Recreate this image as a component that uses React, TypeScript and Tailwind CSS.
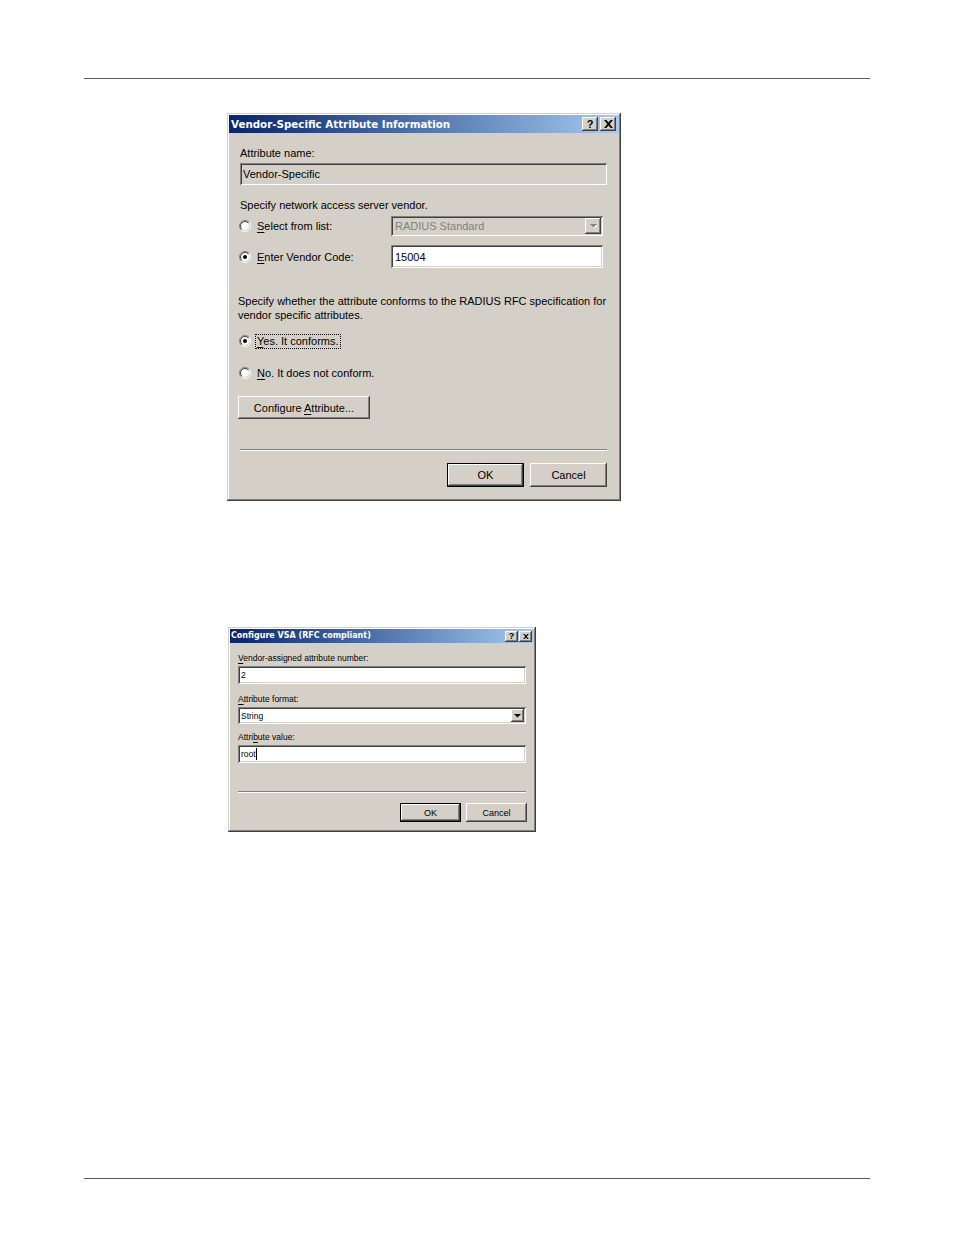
import React from "react";

const raised =
  "shadow-[inset_-1px_-1px_#404040,inset_1px_1px_#ffffff,inset_-2px_-2px_#808080,inset_2px_2px_#d4d0c8]";
const sunken =
  "shadow-[inset_1px_1px_#808080,inset_-1px_-1px_#ffffff,inset_2px_2px_#404040,inset_-2px_-2px_#d4d0c8]";
const windowBorder =
  "shadow-[inset_-1px_-1px_#404040,inset_1px_1px_#d4d0c8,inset_-2px_-2px_#808080,inset_2px_2px_#ffffff]";
const defaultBtn =
  "shadow-[inset_0_0_0_1px_#000000,inset_-2px_-2px_#404040,inset_2px_2px_#ffffff,inset_-3px_-3px_#808080]";

function Radio({ checked, size = 12 }: { checked?: boolean; size?: number }) {
  return (
    <svg width={size} height={size} viewBox="0 0 12 12" className="shrink-0">
      <defs>
        <linearGradient id="rg1" x1="0" y1="0" x2="1" y2="1">
          <stop offset="0.5" stopColor="#808080" />
          <stop offset="0.5" stopColor="#ffffff" />
        </linearGradient>
        <linearGradient id="rg2" x1="0" y1="0" x2="1" y2="1">
          <stop offset="0.5" stopColor="#404040" />
          <stop offset="0.5" stopColor="#d4d0c8" />
        </linearGradient>
      </defs>
      <circle cx="6" cy="6" r="5.5" fill="none" stroke="url(#rg1)" strokeWidth="1" />
      <circle cx="6" cy="6" r="4.5" fill="#ffffff" stroke="url(#rg2)" strokeWidth="1" />
      {checked && <circle cx="6" cy="6" r="2" fill="#000000" />}
    </svg>
  );
}

function TitleBtn({ kind, w, h, fs }: { kind: "help" | "close"; w: number; h: number; fs: string }) {
  return (
    <div
      className={`${raised} bg-[#d4d0c8] flex items-center justify-center`}
      style={{ width: w, height: h }}
    >
      {kind === "help" ? (
        <span className={`font-bold text-black ${fs} leading-none`}>?</span>
      ) : (
        <svg width={w - 7} height={h - 6} viewBox="0 0 8 7">
          <path d="M0 0h2l2 2.2L6 0h2L5 3.5L8 7H6L4 4.8L2 7H0l3-3.5z" fill="#000" />
        </svg>
      )}
    </div>
  );
}

function DropArrow({ disabled, w, h }: { disabled?: boolean; w: number; h: number }) {
  return (
    <div
      className={`${raised} bg-[#d4d0c8] flex items-center justify-center shrink-0`}
      style={{ width: w, height: h }}
    >
      <svg width="7" height="4" viewBox="0 0 7 4">
        {disabled && <path d="M1 1h7L4.5 4.5z" fill="#ffffff" />}
        <path d="M0 0h7L3.5 3.5z" fill={disabled ? "#808080" : "#000000"} />
      </svg>
    </div>
  );
}

function U({ children }: { children: React.ReactNode }) {
  return <span className="underline underline-offset-[2px]">{children}</span>;
}

const titleFont = { fontFamily: '"DejaVu Sans", Verdana, sans-serif' };

export default function App() {
  return (
    <div
      className="w-[954px] h-[1235px] bg-white flex flex-col text-black"
      style={{ fontFamily: '"Liberation Sans", Arial, sans-serif' }}
    >
      <div className="pt-[78px]" />
      <div className="ml-[84px] w-[786px] h-px bg-[#5a5a5a]" />

      {/* Dialog 1 */}
      <div className={`ml-[227px] mt-[34px] w-[394px] h-[388px] bg-[#d4d0c8] p-[2px] ${windowBorder} flex flex-col`}>
        <div className="h-[18px] bg-linear-to-r from-[#0a246a] to-[#a6caf0] flex items-center pl-[2px] pr-[3px]">
          <span className="text-white font-bold text-[10.3px] leading-none pt-[1px]" style={titleFont}>
            Vendor-Specific Attribute Information
          </span>
          <div className="ml-auto flex gap-[2px]">
            <TitleBtn kind="help" w={16} h={14} fs="text-[11px]" />
            <TitleBtn kind="close" w={16} h={14} fs="text-[11px]" />
          </div>
        </div>
        <div className="pl-[9px] pr-[12px] pt-[13px] flex flex-col text-[11px] leading-[14px]">
          <div className="h-[14px] pl-[2px] flex items-center">Attribute name:</div>
          <div className={`mt-[3px] ml-[2px] h-[22px] ${sunken} bg-[#d4d0c8] flex items-center pl-[3px]`}>
            Vendor-Specific
          </div>
          <div className="mt-[13px] h-[14px] pl-[2px] flex items-center">
            Specify network access server vendor.
          </div>
          <div className="mt-[4px] h-[20px] flex items-center pr-[4px]">
            <div className="w-[153px] flex items-center gap-[6px] pl-[1px]">
              <Radio />
              <span>
                <U>S</U>elect from list:
              </span>
            </div>
            <div className={`flex-1 h-[20px] ${sunken} bg-[#d4d0c8] flex items-center pl-[4px] pr-[2px]`}>
              <span className="text-[#808080] flex-1">RADIUS Standard</span>
              <DropArrow disabled w={16} h={16} />
            </div>
          </div>
          <div className="mt-[9px] h-[23px] flex items-center pr-[4px]">
            <div className="w-[153px] flex items-center gap-[6px] pl-[1px]">
              <Radio checked />
              <span>
                <U>E</U>nter Vendor Code:
              </span>
            </div>
            <div className={`flex-1 h-[23px] ${sunken} bg-white flex items-center pl-[4px]`}>15004</div>
          </div>
          <div className="mt-[26px] leading-[14px]">
            Specify whether the attribute conforms to the RADIUS RFC specification for
            <br />
            vendor specific attributes.
          </div>
          <div className="mt-[11px] h-[16px] flex items-center gap-[4px] pl-[1px]">
            <Radio checked />
            <span className="border border-dotted border-black px-[1px] leading-[13px]">
              <U>Y</U>es. It conforms.
            </span>
          </div>
          <div className="mt-[16px] h-[16px] flex items-center gap-[6px] pl-[1px]">
            <Radio />
            <span>
              <U>N</U>o. It does not conform.
            </span>
          </div>
          <div className={`mt-[15px] w-[132px] h-[23px] ${raised} bg-[#d4d0c8] flex items-center justify-center`}>
            <span>
              Configure <U>A</U>ttribute...
            </span>
          </div>
          <div className="mt-[30px] ml-[2px] h-[2px] border-t border-[#808080] border-b border-b-white" />
          <div className="mt-[12px] flex justify-end gap-[6px]">
            <div className={`w-[77px] h-[24px] ${defaultBtn} bg-[#d4d0c8] flex items-center justify-center`}>
              OK
            </div>
            <div className={`w-[77px] h-[24px] ${raised} bg-[#d4d0c8] flex items-center justify-center`}>
              Cancel
            </div>
          </div>
        </div>
      </div>

      {/* Dialog 2 */}
      <div className={`ml-[228px] mt-[126px] w-[308px] h-[205px] bg-[#d4d0c8] p-[2px] ${windowBorder} flex flex-col`}>
        <div className="h-[14px] bg-linear-to-r from-[#0a246a] to-[#a6caf0] flex items-center pl-[1px] pr-[2px]">
          <span className="text-white font-bold text-[8px] leading-none" style={titleFont}>
            Configure VSA (RFC compliant)
          </span>
          <div className="ml-auto flex gap-[1px]">
            <TitleBtn kind="help" w={13} h={11} fs="text-[9px]" />
            <TitleBtn kind="close" w={13} h={11} fs="text-[9px]" />
          </div>
        </div>
        <div className="pl-[8px] pr-[8px] pt-[9px] flex flex-col text-[8.5px] leading-[12px]">
          <div className="h-[12px] flex items-center">
            <span>
              <U>V</U>endor-assigned attribute number:
            </span>
          </div>
          <div className={`mt-[2px] h-[18px] ${sunken} bg-white flex items-center pl-[3px]`}>2</div>
          <div className="mt-[9px] h-[12px] flex items-center">
            <span>
              <U>A</U>ttribute format:
            </span>
          </div>
          <div className={`mt-[2px] h-[17px] ${sunken} bg-white flex items-center pl-[3px] pr-[2px]`}>
            <span className="flex-1">String</span>
            <DropArrow w={13} h={13} />
          </div>
          <div className="mt-[7px] h-[12px] flex items-center">
            <span>
              Attri<U>b</U>ute value:
            </span>
          </div>
          <div className={`mt-[2px] h-[18px] ${sunken} bg-white flex items-center pl-[3px]`}>
            <span>root</span>
            <span className="w-px h-[12px] bg-black" />
          </div>
          <div className="mt-[28px] h-[2px] border-t border-[#808080] border-b border-b-white" />
          <div className="mt-[10px] flex justify-end gap-[5px] -mr-[1px] text-[9px]">
            <div className={`w-[61px] h-[19px] ${defaultBtn} bg-[#d4d0c8] flex items-center justify-center`}>
              OK
            </div>
            <div className={`w-[61px] h-[19px] ${raised} bg-[#d4d0c8] flex items-center justify-center`}>
              Cancel
            </div>
          </div>
        </div>
      </div>

      <div className="mt-auto ml-[84px] w-[786px] h-px bg-[#5a5a5a]" />
      <div className="h-[56px]" />
    </div>
  );
}
